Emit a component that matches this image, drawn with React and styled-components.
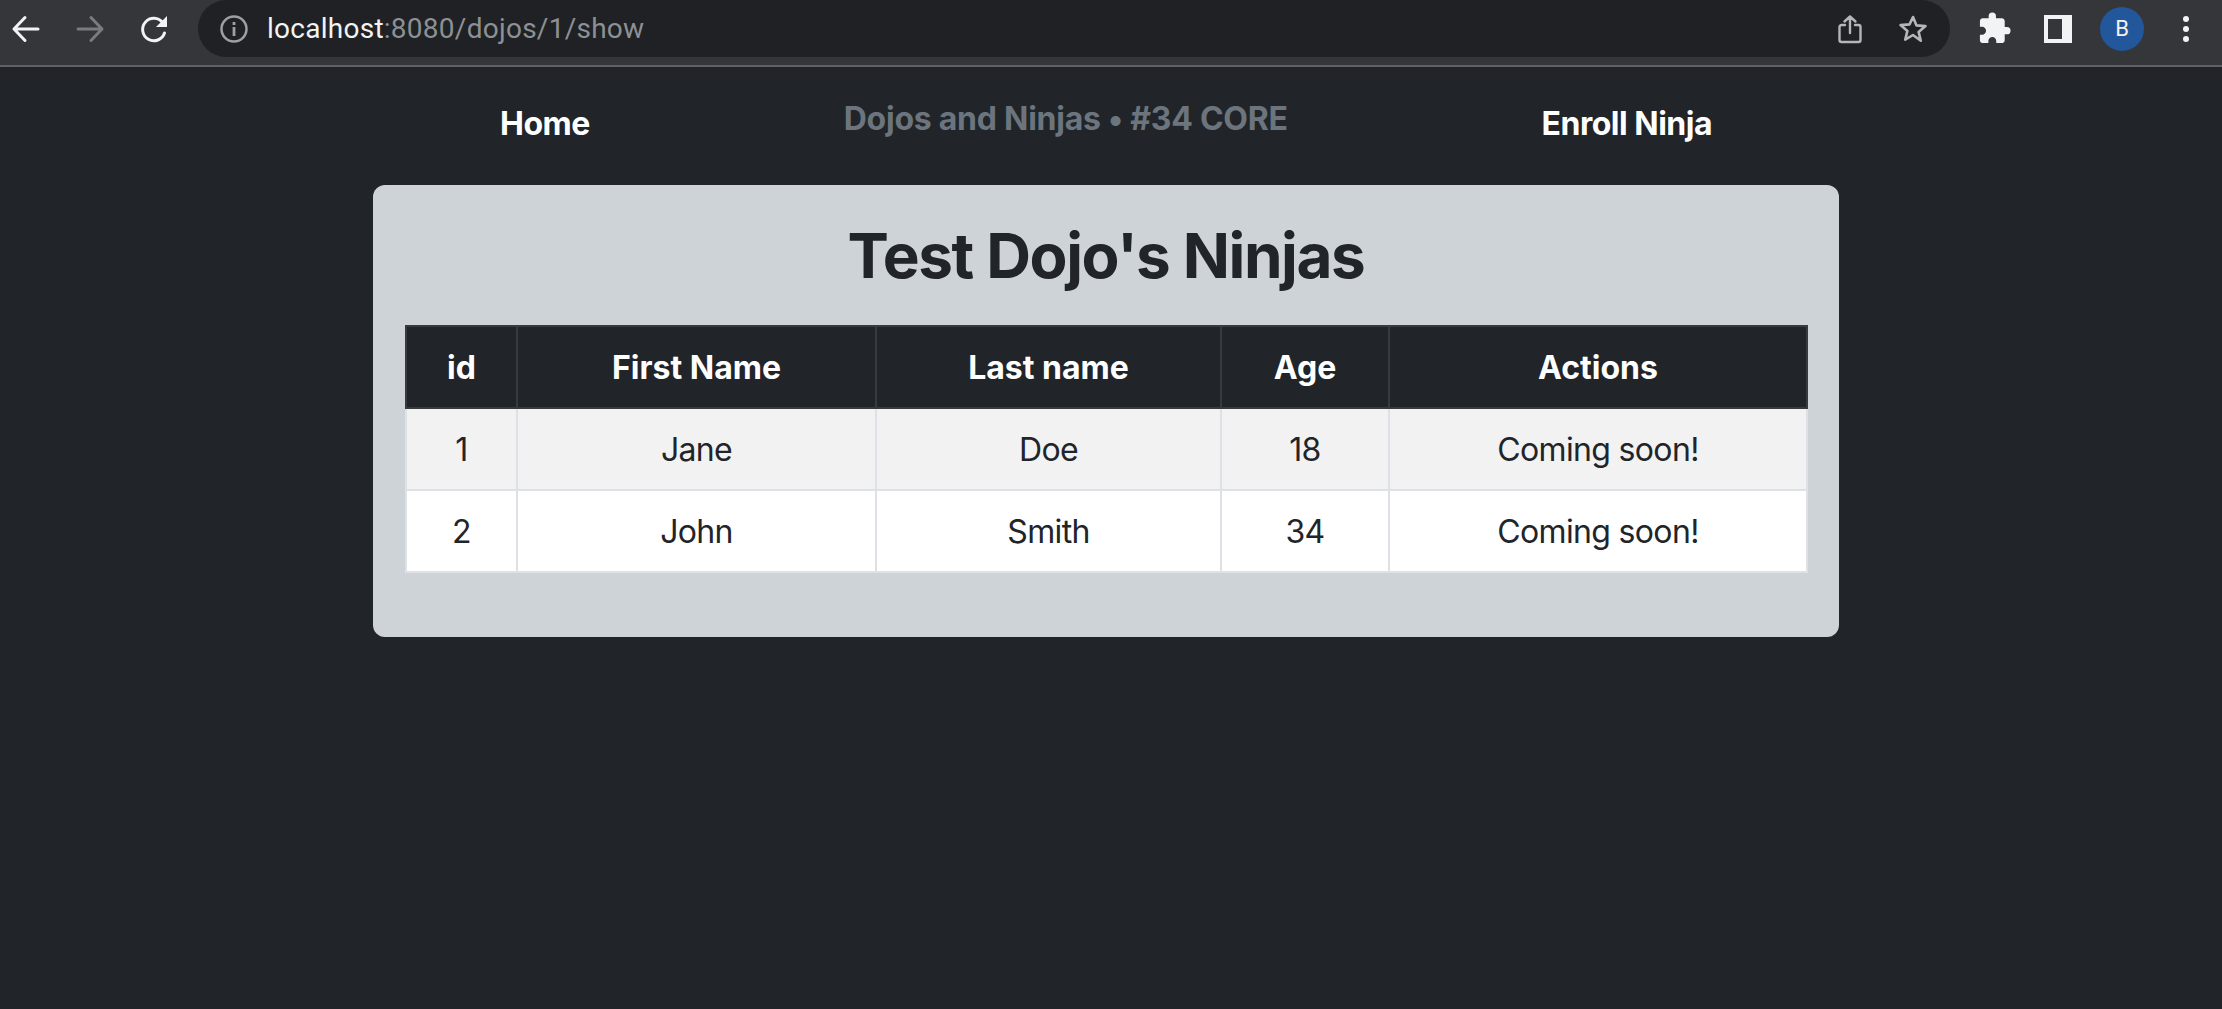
import React from 'react';
import styled, { createGlobalStyle } from 'styled-components';
import { MdExtension } from 'react-icons/md';

const Global = createGlobalStyle`
  html, body { margin: 0; padding: 0; background: #212529; }
  body { font-family: Inter, "Liberation Sans", sans-serif; color: #212529; min-height: 1009px; overflow: hidden; }
`;

const Toolbar = styled.header`
  display: flex;
  align-items: flex-start;
  height: 65px;
  padding-left: 3px;
  background: #35363a;
  border-bottom: 2px solid #5f6063;
`;
const ToolGroup = styled.div`
  display: flex;
  gap: 18px;
  height: 57px;
`;
const IconBox = styled.div`
  width: 46px;
  height: 57px;
  display: flex;
  align-items: center;
  justify-content: center;
  flex: none;
  color: ${p => p.$color || '#f1f3f4'};
`;
const Pill = styled.div`
  flex: none;
  width: 1752px;
  height: 57px;
  margin: 0 21px;
  padding: 0 14px 0 13px;
  box-sizing: border-box;
  display: flex;
  align-items: center;
  background: #202124;
  border-radius: 29px;
`;
const Url = styled.div`
  margin-left: 10px;
  flex: 1;
  font-family: Roboto, "Liberation Sans", sans-serif;
  font-size: 28px;
  letter-spacing: 0.26px;
  color: #f1f3f4;
  white-space: nowrap;
`;
const UrlRest = styled.span`
  color: #8d9094;
`;
const PillIcons = styled.div`
  display: flex;
  gap: 17px;
`;
const Avatar = styled.div`
  width: 44px;
  height: 44px;
  border-radius: 50%;
  background: #22579b;
  color: #f1f3f4;
  display: flex;
  align-items: center;
  justify-content: center;
  font-family: Roboto, "Liberation Sans", sans-serif;
  font-size: 22px;
`;

const Main = styled.main`
  width: 1466px;
  margin-left: 373px;
`;
const Nav = styled.nav`
  height: 118px;
  padding-top: 28px;
  box-sizing: border-box;
  display: flex;
  justify-content: space-around;
  align-items: flex-start;
`;
const NavLink = styled.a`
  margin-top: 5px;
  font-size: 32px;
  line-height: 48px;
  font-weight: 700;
  letter-spacing: -0.5px;
  color: #fff;
`;
const Brand = styled.span`
  font-size: 32px;
  line-height: 48px;
  font-weight: 700;
  letter-spacing: -0.25px;
  color: #6c757d;
`;
const Card = styled.section`
  height: 452px;
  box-sizing: border-box;
  padding: 32px;
  background: #ced3d7;
  border-radius: 12px;
`;
const Title = styled.h1`
  margin: 0 0 32px;
  padding-top: 1px;
  height: 75px;
  font-size: 62px;
  line-height: 76px;
  font-weight: 700;
  letter-spacing: -1.4px;
  text-align: center;
  color: #212529;
`;
const Table = styled.table`
  width: 1401px;
  table-layout: fixed;
  border-collapse: collapse;
  font-size: 32px;
  line-height: 48px;
  text-align: center;
`;
const HeadCell = styled.th`
  height: 82px;
  box-sizing: border-box;
  padding: 17px 16px 15px;
  font-weight: 700;
  color: #fff;
  background: #212529;
  border: 2px solid #373b3e;
`;
const Row = styled.tr`
  background: ${p => (p.$striped ? '#f2f2f2' : '#fff')};
`;
const Cell = styled.td`
  height: 82px;
  box-sizing: border-box;
  padding: 17px 16px 15px;
  color: #212529;
  letter-spacing: -0.65px;
  border: 2px solid #dee2e6;
`;

const Stroke = ({ size = 30, w = 3, children }) => (
  <svg width={size} height={size} viewBox="0 0 30 30" fill="none" stroke="currentColor" strokeWidth={w} strokeLinecap="round" strokeLinejoin="round">
    {children}
  </svg>
);

const rows = [
  [1, 'Jane', 'Doe', 18],
  [2, 'John', 'Smith', 34],
];
const columns = [
  ['id', 111],
  ['First Name', 359],
  ['Last name', 345],
  ['Age', 168],
  ['Actions', 418],
];

export default function App() {
  return (
    <>
      <Global />
      <Toolbar>
        <ToolGroup>
          <IconBox>
            <Stroke><path d="M27 15H3M14 3.5 3 15l11 11.5" /></Stroke>
          </IconBox>
          <IconBox $color="#797b7f">
            <Stroke><path d="M3 15h24M16 3.5 27 15 16 26.5" /></Stroke>
          </IconBox>
          <IconBox>
            <svg width="30" height="30" viewBox="0 0 30 30">
              <path d="M25.5 19a11.2 11.2 0 1 1-1.7-10.2" fill="none" stroke="currentColor" strokeWidth="3" strokeLinecap="round" />
              <path d="M28 2v11H17z" fill="currentColor" />
            </svg>
          </IconBox>
        </ToolGroup>
        <Pill>
          <IconBox $color="#9aa0a6">
            <svg width="30" height="30" viewBox="0 0 30 30">
              <circle cx="15" cy="15" r="12.5" fill="none" stroke="currentColor" strokeWidth="2.5" />
              <rect x="13.6" y="13" width="2.8" height="9" fill="currentColor" />
              <rect x="13.6" y="8" width="2.8" height="3" fill="currentColor" />
            </svg>
          </IconBox>
          <Url>localhost<UrlRest>:8080/dojos/1/show</UrlRest></Url>
          <PillIcons>
            <IconBox $color="#b4b6b9">
              <Stroke w={2.4}><path d="M15 19V2.5M9.5 7.5 15 2.5l5.5 5M10 11H6.5a2 2 0 0 0-2 2v13a2 2 0 0 0 2 2h17a2 2 0 0 0 2-2V13a2 2 0 0 0-2-2H20" /></Stroke>
            </IconBox>
            <IconBox $color="#b4b6b9">
              <Stroke w={2.6}><path d="M15 3l3.5 8.4 9 .7-6.9 5.8 2.2 8.8L15 21l-7.8 4.7 2.2-8.8-6.9-5.8 9-.7z" /></Stroke>
            </IconBox>
          </PillIcons>
        </Pill>
        <ToolGroup>
          <IconBox><MdExtension size={35} /></IconBox>
          <IconBox>
            <svg width="28" height="28" viewBox="0 0 28 28">
              <path fillRule="evenodd" d="M0 0h28v28H0zM4 4v20h14V4z" fill="currentColor" />
            </svg>
          </IconBox>
          <IconBox><Avatar>B</Avatar></IconBox>
          <IconBox>
            <svg width="8" height="28" viewBox="0 0 8 28" fill="currentColor">
              <circle cx="4" cy="4" r="3" /><circle cx="4" cy="14" r="3" /><circle cx="4" cy="24" r="3" />
            </svg>
          </IconBox>
        </ToolGroup>
      </Toolbar>
      <Main>
        <Nav>
          <NavLink>Home</NavLink>
          <Brand>Dojos and Ninjas • #34 CORE</Brand>
          <NavLink>Enroll Ninja</NavLink>
        </Nav>
        <Card>
          <Title>Test Dojo's Ninjas</Title>
          <Table>
            <colgroup>
              {columns.map(([name, width]) => <col key={name} width={width} />)}
            </colgroup>
            <thead>
              <tr>{columns.map(([name]) => <HeadCell key={name}>{name}</HeadCell>)}</tr>
            </thead>
            <tbody>
              {rows.map((r, i) => (
                <Row key={r[0]} $striped={i % 2 === 0}>
                  {r.map((v, j) => <Cell key={j}>{v}</Cell>)}
                  <Cell>Coming soon!</Cell>
                </Row>
              ))}
            </tbody>
          </Table>
        </Card>
      </Main>
    </>
  );
}
